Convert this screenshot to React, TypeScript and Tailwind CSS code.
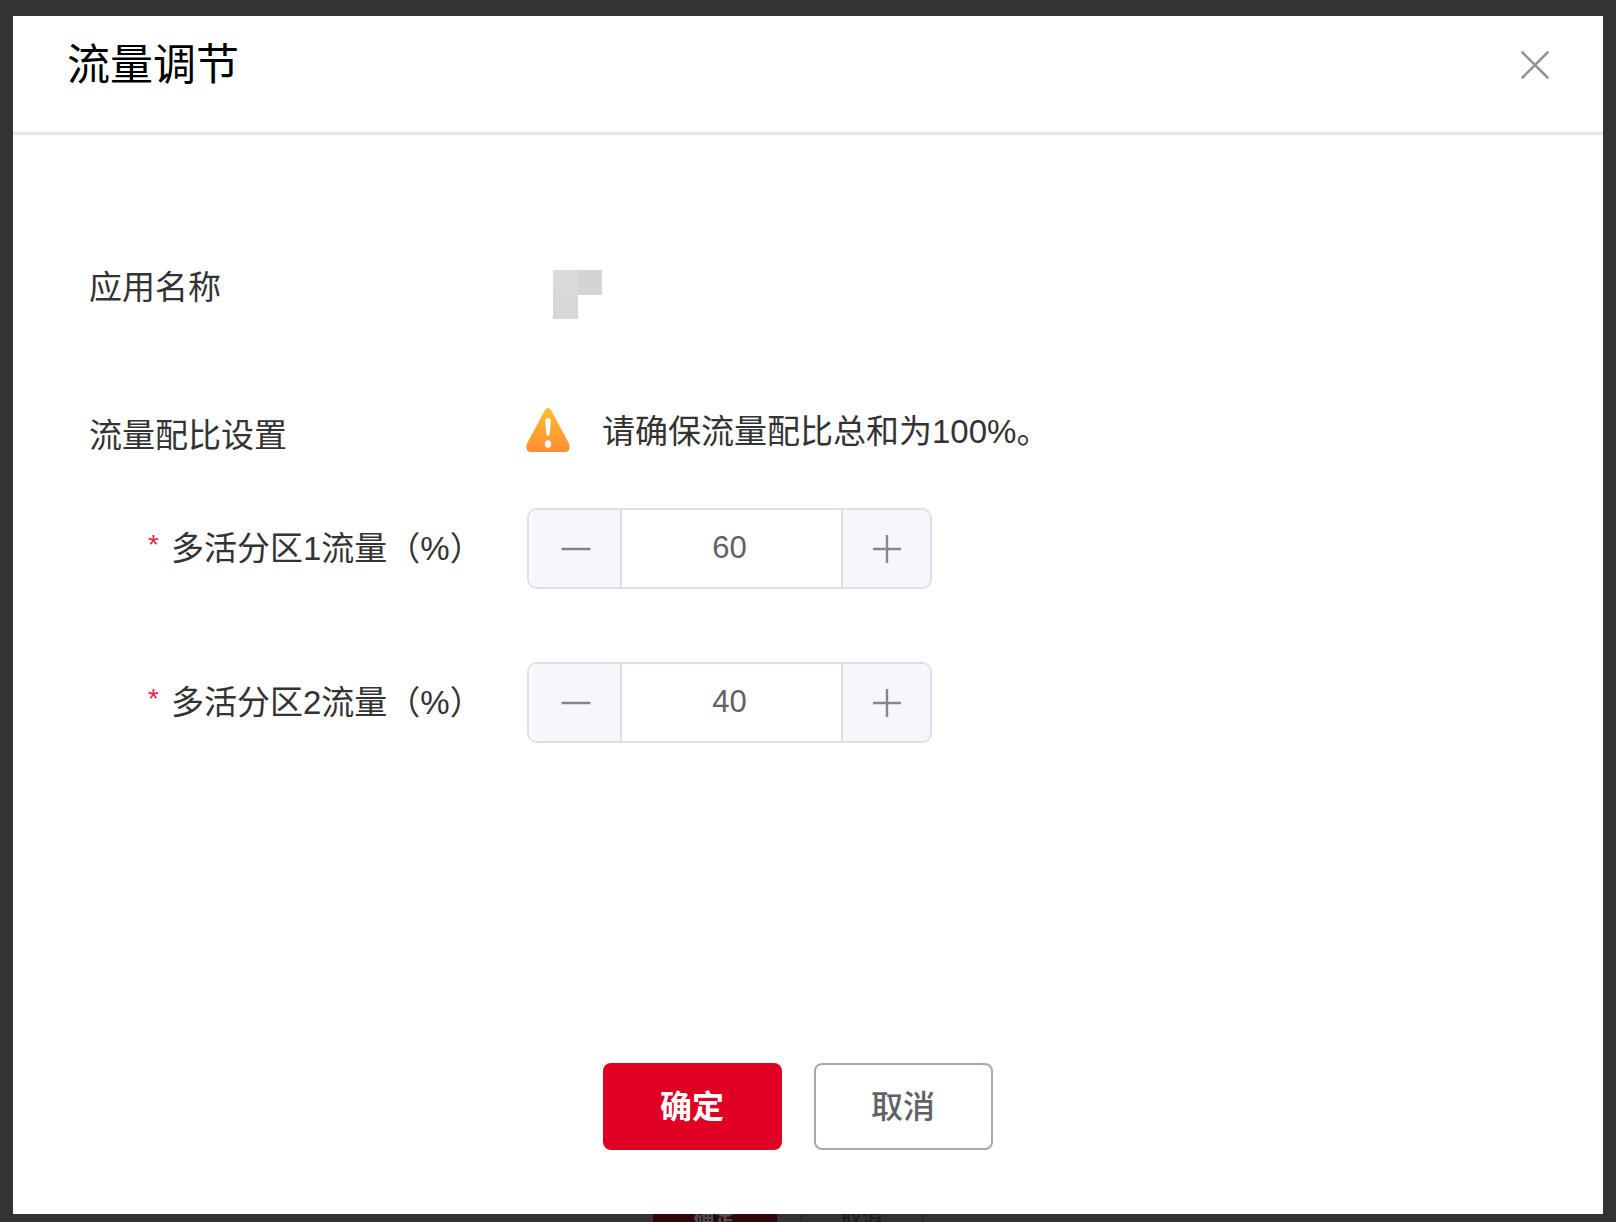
import { useState } from "react";

const partitions = [
  { id: "zone-1", label: "多活分区1流量（%）", initial: 60 },
  { id: "zone-2", label: "多活分区2流量（%）", initial: 40 },
];

function WarningIcon() {
  return (
    <svg viewBox="0 0 44 46" className="h-[46px] w-[44px] shrink-0" aria-hidden="true">
      <defs>
        <linearGradient id="warning-fill" x1="0" y1="0" x2="0" y2="1">
          <stop offset="0" stopColor="#ffbf2b" />
          <stop offset="1" stopColor="#ff8c36" />
        </linearGradient>
      </defs>
      <path
        d="M18.6 3.4Q22 -1.4 25.4 3.4L43 36.5Q45.2 44.6 39 45H5Q-1.2 44.6 1 36.5Z"
        fill="url(#warning-fill)"
      />
      <path d="M22 11Q25 11 24.7 14.5L23.8 26.5Q23.5 29 22 29Q20.5 29 20.2 26.5L19.3 14.5Q19 11 22 11Z" fill="#fff" />
      <ellipse cx="22" cy="37" rx="3.2" ry="3.8" fill="#fff" />
    </svg>
  );
}

function Stepper({ id, initial }: { id: string; initial: number }) {
  const [value, setValue] = useState(initial);
  const update = (next: number) => setValue(Math.min(100, Math.max(0, next)));

  return (
    <div className="flex h-[81px] w-[405px] overflow-hidden rounded-[10px] border-2 border-[#dfdfea] bg-white">
      <button
        type="button"
        aria-label="减少"
        onClick={() => update(value - 1)}
        className="ml-0.5 flex w-[91px] shrink-0 items-center justify-center rounded-l-[8px] border-r-2 border-[#dfdfea] bg-[#f5f7fb] text-[#85878b]"
      >
        <svg viewBox="0 0 30 30" className="size-[30px]" fill="none" stroke="currentColor" strokeWidth="2.4" aria-hidden="true">
          <path d="M0.5 15H29.5" />
        </svg>
      </button>
      <input
        id={id}
        type="text"
        inputMode="numeric"
        value={value}
        onChange={(e) => update(Number(e.target.value) || 0)}
        className="min-w-0 flex-1 bg-white pr-1 pb-0.5 text-center text-[31px] text-[#606266] outline-none"
      />
      <button
        type="button"
        aria-label="增加"
        onClick={() => update(value + 1)}
        className="flex w-[89px] shrink-0 items-center justify-center border-l-2 border-[#dfdfea] bg-[#f5f7fb] text-[#85878b]"
      >
        <svg viewBox="0 0 30 30" className="size-[30px]" fill="none" stroke="currentColor" strokeWidth="2.4" aria-hidden="true">
          <path d="M1 15H29M15 1V29" />
        </svg>
      </button>
    </div>
  );
}

export default function App() {
  return (
    <div className="flex h-screen flex-col overflow-hidden bg-[#333333] px-[13px] pt-4 font-['Liberation_Sans','Noto_Sans_CJK_SC',sans-serif] text-[33px] leading-[50px] text-[#333333]">
      <section role="dialog" aria-labelledby="dialog-title" className="flex min-h-0 flex-1 flex-col bg-white">
        <header className="flex h-[119px] shrink-0 items-start justify-between border-b-3 border-[#e6e6f0] pt-[17px] pr-[54px] pl-[54px]">
          <h1 id="dialog-title" className="text-[43px] leading-[64px] font-normal text-black">
            流量调节
          </h1>
          <button type="button" aria-label="关闭" className="mt-[18px] text-[#909399]">
            <svg viewBox="0 0 28 28" className="size-[28px]" fill="none" stroke="currentColor" strokeWidth="2.6" strokeLinecap="round" aria-hidden="true">
              <path d="M1.5 1.5L26.5 26.5M26.5 1.5L1.5 26.5" />
            </svg>
          </button>
        </header>

        <form className="flex flex-1 flex-col pt-32 pl-[76px]" onSubmit={(e) => e.preventDefault()}>
          <div className="flex h-[60px] items-start">
            <span className="w-[464px] shrink-0">应用名称</span>
            <div className="mt-[7px] grid grid-cols-[25px_24px] grid-rows-[25px_24px]" aria-label="应用名称已隐藏">
              <span className="bg-[#dadada]" />
              <span className="bg-[#d3d3d3]" />
              <span className="bg-[#d7d7d7]" />
            </div>
          </div>

          <div className="mt-[84px] flex h-[52px] items-start">
            <span className="mt-1 w-[437px] shrink-0">流量配比设置</span>
            <WarningIcon />
            <p className="ml-8">请确保流量配比总和为100%。</p>
          </div>

          <div className="mt-[49px] flex flex-col gap-[73px]">
            {partitions.map(({ id, label, initial }) => (
              <div key={id} className="flex items-center">
                <label htmlFor={id} className="flex w-[438px] shrink-0 pl-[59px] whitespace-nowrap">
                  <span className="w-[23px] shrink-0 text-[28px] leading-[42px] text-[#e6284b]" aria-hidden="true">
                    *
                  </span>
                  {label}
                </label>
                <Stepper id={id} initial={initial} />
              </div>
            ))}
          </div>

          <div className="mt-auto mb-16 flex justify-center gap-8 pr-[97px] text-[32px]">
            <button type="submit" className="h-[87px] w-[179px] rounded-lg bg-[#df0024] font-bold text-white">
              确定
            </button>
            <button type="button" className="h-[87px] w-[179px] rounded-lg border-2 border-[#a6a9b3] bg-white font-medium text-[#606266]">
              取消
            </button>
          </div>
        </form>
      </section>

      {/* dimmed page behind the dialog */}
      <div className="flex h-2 shrink-0 items-center justify-center gap-[23px] overflow-hidden pr-10 text-[21px] leading-6" aria-hidden="true">
        <span className="w-[124px] bg-[#300509] text-center font-bold text-[#4d4d4d]">确定</span>
        <span className="w-[124px] border-x-2 border-[#292929] text-center font-medium text-[#1c1c1c]">取消</span>
      </div>
    </div>
  );
}
